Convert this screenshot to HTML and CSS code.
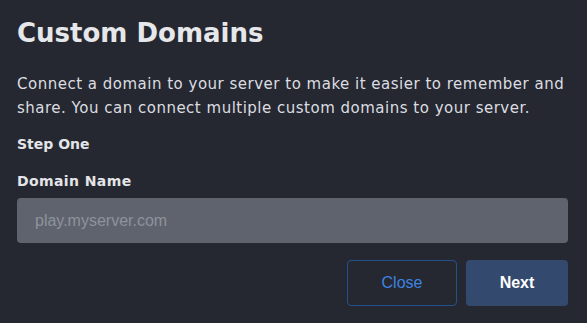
FILE: index.html
```html
<!DOCTYPE html>
<html lang="en">
<head>
    <meta charset="UTF-8">
    <title>Custom Domains</title>
    <link rel="stylesheet" href="styles.css">
</head>
<body>
    <div class="modal">
        <h1>Custom Domains</h1>
        <p class="intro">Connect a domain to your server to make it easier to remember and share. You can connect multiple custom domains to your server.</p>

        <h3 class="step">Step One</h3>

        <label class="field-label" for="domainName">Domain Name</label>
        <input type="text" id="domainName" class="field" placeholder="play.myserver.com">

        <div class="actions">
            <button class="btn btn-outline">Close</button>
            <button class="btn btn-primary">Next</button>
        </div>
    </div>
</body>
</html>
```

FILE: styles.css
```css
body {
    margin: 0;
    padding: 0;
    background-color: #252830;
    font-family: "DejaVu Sans", sans-serif;
    color: #e4e5e8;
}

.modal {
    padding: 16px 19px 18px 17px;
}

h1 {
    margin: 0;
    font-size: 26px;
    font-weight: bold;
    line-height: 34px;
    color: #e6e7ea;
}

.intro {
    margin: 22px 0 0;
    font-size: 15px;
    line-height: 24px;
    letter-spacing: 0.5px;
    color: #dcdde0;
}

.step {
    margin: 14px 0 0;
    font-size: 14px;
    line-height: 20px;
    font-weight: bold;
}

.field-label {
    display: block;
    margin-top: 17px;
    font-size: 14px;
    line-height: 20px;
    font-weight: bold;
    letter-spacing: 0.4px;
}

.field {
    display: block;
    box-sizing: border-box;
    width: 100%;
    height: 45px;
    margin-top: 7px;
    padding: 0 18px;
    border: none;
    border-radius: 4px;
    background-color: #5f636e;
    font-family: "Liberation Sans", Arial, sans-serif;
    font-size: 16px;
    color: #e4e5e8;
}

.field::placeholder {
    color: #8e929c;
}

.actions {
    display: flex;
    justify-content: flex-end;
    gap: 9px;
    margin-top: 17px;
}

.btn {
    height: 46px;
    border-radius: 4px;
    font-family: "Liberation Sans", Arial, sans-serif;
    font-size: 16px;
    cursor: pointer;
}

.btn-outline {
    width: 110px;
    background: transparent;
    border: 1px solid #24518e;
    color: #3d83e0;
}

.btn-primary {
    width: 102px;
    background-color: #34496e;
    border: none;
    color: #ffffff;
    font-weight: bold;
}
```
